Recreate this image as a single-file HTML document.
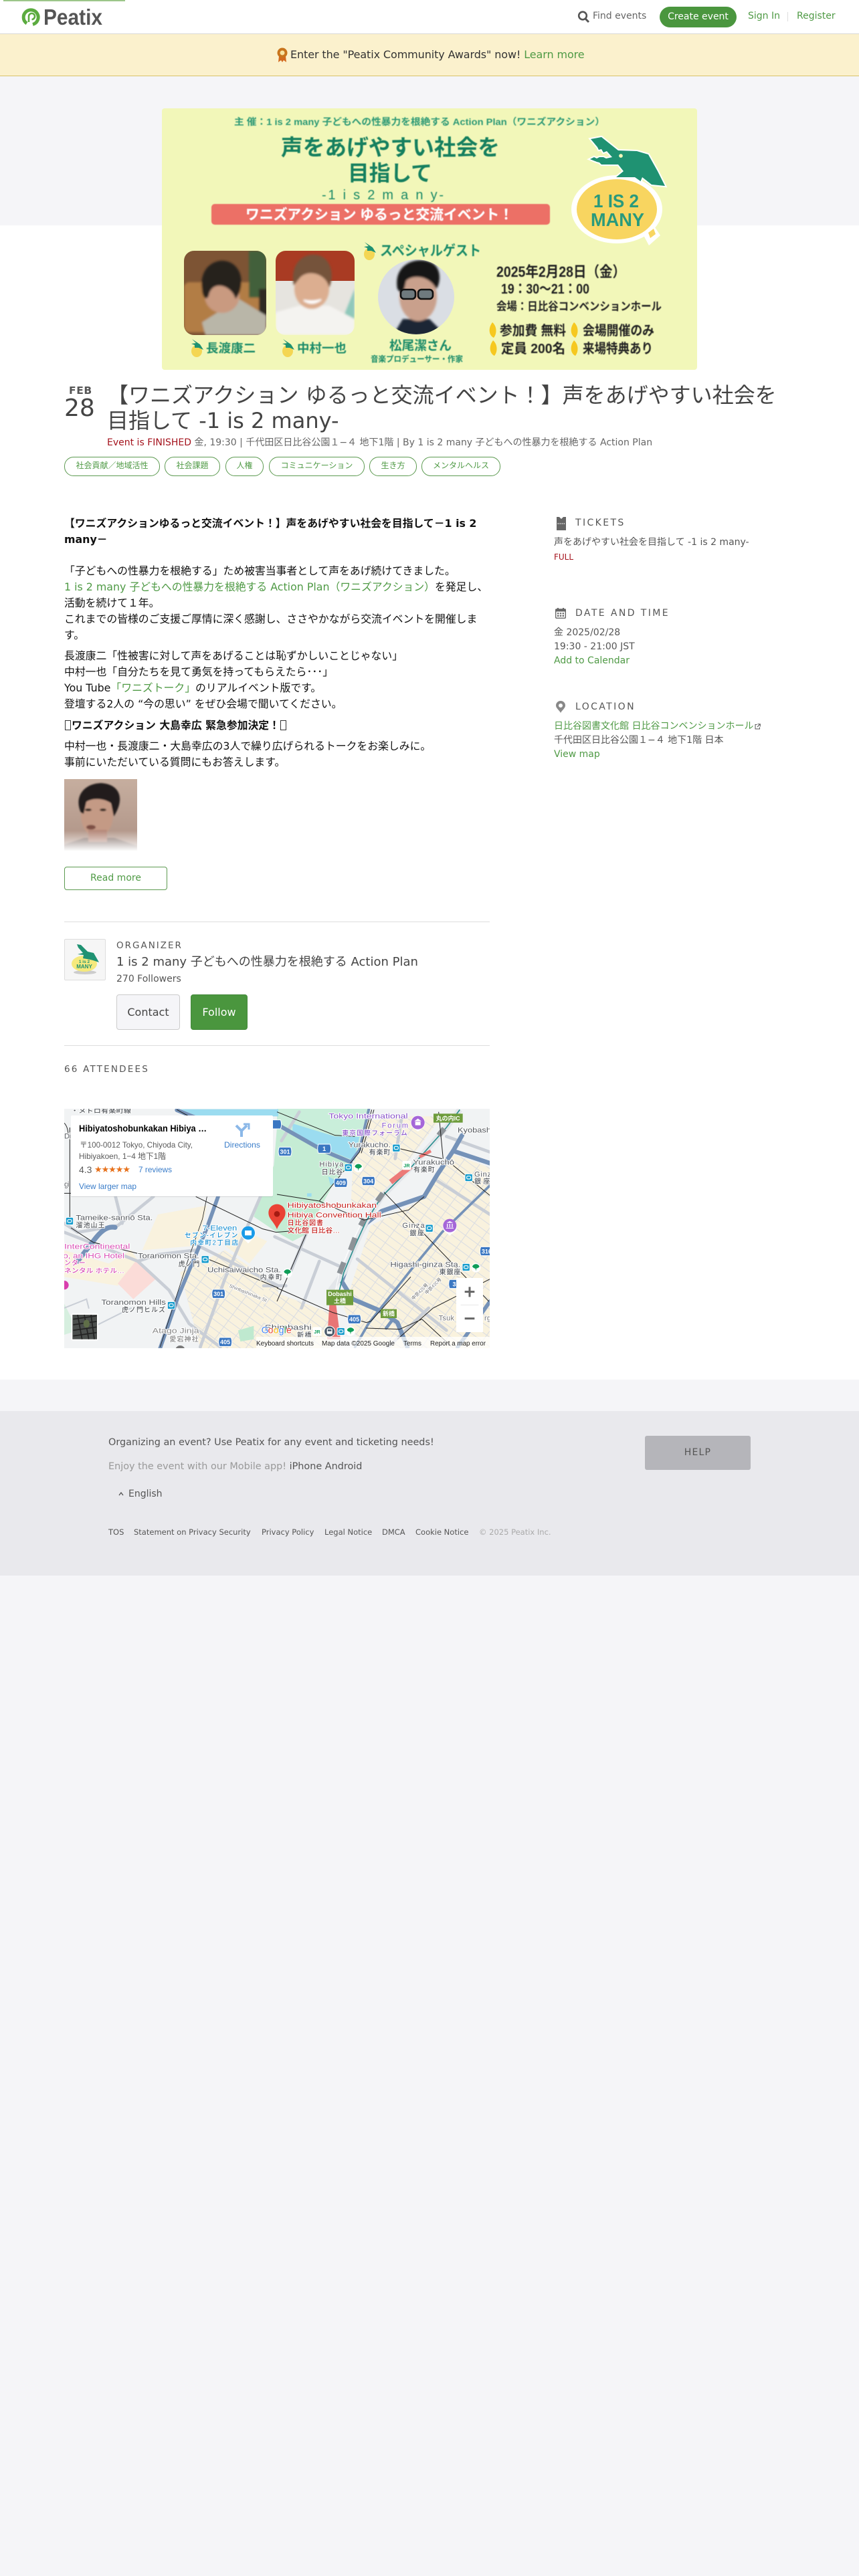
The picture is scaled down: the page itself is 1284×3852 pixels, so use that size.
<!DOCTYPE html>
<html lang="ja"><head><meta charset="utf-8"><title>Peatix</title>
<style>
html,body{margin:0;padding:0}
body{width:1284px;height:3852px;background:#f5f5f8;position:relative;overflow:hidden;font-family:"DejaVu Sans","Noto Sans CJK JP",sans-serif;color:#444}
.a{position:absolute;white-space:nowrap;line-height:20px}
.g{color:#4f9a45}
.b{color:#111;font-size:15.84px}
.s{font-size:14px;color:#555}
.h{font-size:14px;letter-spacing:2.4px;color:#555}
.tag{position:absolute;top:683px;height:27px;line-height:25px;border:1px solid #5c9a50;border-radius:14px;color:#4f9a45;font-size:12px;text-align:center;box-sizing:content-box;white-space:nowrap}
.f{font-size:11.5px;color:#555;top:2281px}
svg{position:absolute;display:block;overflow:hidden}
svg text{font-family:"Liberation Sans","Noto Sans CJK JP",sans-serif}
.tofu{display:inline-block;width:7px;height:13px;border:1px solid #333;vertical-align:-2px;margin:0 1px}
.m text{font-size:33px;fill:#55595e;stroke:#fff;stroke-width:6px;paint-order:stroke;stroke-linejoin:round;font-weight:500}
.m .w{fill:#fff;stroke:none;font-size:27px;text-anchor:middle;font-weight:700}
</style></head><body>

<div style="position:absolute;left:0;top:0;width:1284px;height:50px;background:#fff;border-bottom:1px solid #d8d8d4"></div>
<div style="position:absolute;left:5px;top:0;width:182px;height:2px;background:#9cc68a"></div>
<svg style="left:30px;top:8px" width="130" height="34" viewBox="0 0 130 34">
<path d="M10,27 A11,11 0 1 1 19,28.5" fill="none" stroke="#5bab3f" stroke-width="5"/>
<path d="M13,25 V16.5 A4.5,4.5 0 1 1 17.5,21" fill="none" stroke="#5bab3f" stroke-width="2.6"/>
<text x="35" y="29" font-size="33" font-weight="700" fill="#555" textLength="88" lengthAdjust="spacingAndGlyphs">Peatix</text></svg>
<svg style="left:862px;top:15px" width="20" height="20" viewBox="0 0 20 20"><circle cx="9" cy="8.5" r="5.8" fill="none" stroke="#555" stroke-width="2.6"/><path d="M13 13 L18 18" stroke="#555" stroke-width="3"/></svg>
<div class="a s" style="left:886px;top:14px;color:#666">Find events</div>
<div class="a" style="left:986px;top:10px;width:115px;height:31px;line-height:31px;background:#4a963e;border-radius:16px;color:#fff;font-size:14px;text-align:center">Create event</div>
<div class="a g" style="left:1118px;top:14px;font-size:14px">Sign In</div>
<div style="position:absolute;left:1177px;top:18px;width:1px;height:14px;background:#ddd"></div>
<div class="a g" style="left:1191px;top:14px;font-size:14px">Register</div>

<div style="position:absolute;left:0;top:51px;width:1284px;height:62px;background:#fbf1cd;border-bottom:1px solid #d8c26a"></div>
<svg style="left:412px;top:70px" width="20" height="24" viewBox="0 0 20 24"><path d="M5 14 L4 23 L8 20 L10 23 L12 20 L16 23 L15 14Z" fill="#d2691e"/><circle cx="10" cy="9" r="7.5" fill="#c8741c"/><circle cx="10" cy="9" r="3.5" fill="#f6e2a0"/></svg>
<div class="a" style="left:434px;top:72px;font-size:16px;color:#333;letter-spacing:-.1px">Enter the "Peatix Community Awards" now! <span class="g">Learn more</span></div>

<div style="position:absolute;left:0;top:337px;width:1284px;height:1726px;background:#fff"></div>

<!-- hero -->
<svg style="left:242px;top:162px" width="800" height="391" viewBox="0 0 800 391">
<defs>
<filter id="bl"><feGaussianBlur stdDeviation="1.6"/></filter><filter id="bs"><feGaussianBlur stdDeviation=".45"/></filter>
<clipPath id="p1"><rect x="33" y="213" width="123" height="126" rx="15"/></clipPath>
<clipPath id="p2"><rect x="170" y="213" width="118" height="126" rx="15"/></clipPath>
<clipPath id="p3"><ellipse cx="380" cy="282" rx="57" ry="56"/></clipPath>
<g id="mini"><ellipse cx="0" cy="6" rx="8" ry="9" fill="#f4d653"/><path d="M-7,-12 L5,-4 L10,4 L3,1 L-3,1 L-3,-3 L-8,-5 L-1,-6Z" fill="#1f9272"/></g>
<g id="lem"><path d="M0,-11 C7,-5 7,6 2,12 C-5,9 -7,-2 0,-11Z" fill="#f6c820"/></g>
</defs>
<rect width="800" height="391" rx="4" fill="#f2f7b9"/>
<g font-weight="700" fill="#14805f" filter="url(#bs)">
<text x="108" y="25" font-size="14" fill="#2f9a76" textLength="554" lengthAdjust="spacingAndGlyphs">主 催：1 is 2 many 子どもへの性暴力を根絶する Action Plan（ワニズアクション）</text>
<text x="178" y="70" font-size="33" textLength="327" lengthAdjust="spacingAndGlyphs">声をあげやすい社会を</text>
<text x="278" y="108" font-size="32" textLength="126" lengthAdjust="spacingAndGlyphs">目指して</text>
<text x="239" y="136" font-size="20" font-weight="400" textLength="182" fill="#1f8a68">-1 i s 2 m a n y-</text>
<rect x="74" y="143" width="506" height="31" rx="5" fill="#ec6f66"/>
<text x="125" y="166" font-size="21" fill="#fff" textLength="400" lengthAdjust="spacingAndGlyphs">ワニズアクション ゆるっと交流イベント！</text>
</g>
<ellipse cx="680" cy="151" rx="68" ry="51" fill="#fff"/><ellipse cx="680" cy="151" rx="60" ry="45" fill="#f8d560"/>
<path d="M641,46 L657,43 L682,63 L710,64 L727,69 L741,94 L752,116 L732,114 L718,103 L715.5,109 L707,103 L679,103 L690,94 L682,84 L657,84 L654,81 L650,80 L640,76 L646,73 L650,75 L654,73 L660,73 L664,75 L673,73 L665,64 L660,66 L657,61 L653,62 L651,58Z" fill="#1f9272" stroke="#fff" stroke-width="4" paint-order="stroke"/>
<circle cx="686" cy="71" r="3.5" fill="#f2f7b9" stroke="#1f9272" stroke-width="1.2"/>
<g font-weight="700" fill="#2a9a7c" font-size="28"><text x="645" y="148" textLength="68" lengthAdjust="spacingAndGlyphs">1 IS 2</text><text x="641" y="176" textLength="80" lengthAdjust="spacingAndGlyphs">MANY</text></g>
<path d="M720,190 L735,175 L745,190 L728,205Z" fill="#fff"/><path d="M727,186 L735,180 L738,188 L730,194Z" fill="#f8d560"/>
<g clip-path="url(#p1)"><rect x="33" y="213" width="123" height="126" fill="#7d5434"/><g filter="url(#bl)"><rect x="33" y="260" width="115" height="75" rx="8" fill="#b27d44"/><rect x="130" y="213" width="26" height="70" fill="#42613a"/><rect x="145" y="270" width="12" height="50" fill="#2d2a22"/><path d="M65,339 L60,320 L115,285 L156,310 L156,339Z" fill="#b9b6a8"/><ellipse cx="90" cy="280" rx="26" ry="26" fill="#c99a80"/><path d="M60,270 C55,235 85,220 105,232 C125,245 120,275 110,285 C105,265 75,255 70,280 C66,290 60,280 60,270Z" fill="#26221f"/></g></g>
<g clip-path="url(#p2)"><rect x="170" y="213" width="118" height="45" fill="#a93b23"/><rect x="170" y="258" width="118" height="50" fill="#e6e4df"/><g filter="url(#bl)"><path d="M272,310 L288,270 L288,339 Z" fill="#8fc8ba"/><path d="M170,339 L170,305 L205,295 L250,295 L288,315 L288,339Z" fill="#f4f3f0"/><ellipse cx="224" cy="270" rx="26" ry="30" fill="#dcae90"/><path d="M197,265 C190,225 220,212 240,222 C256,232 256,255 250,268 C245,245 215,240 205,255 Z" fill="#75523a"/><path d="M212,287 Q224,296 238,286 Q226,290 212,287Z" fill="#fff" stroke="#fff" stroke-width="2"/></g></g>
<g clip-path="url(#p3)"><rect x="320" y="220" width="120" height="125" fill="#dadee4"/><g filter="url(#bl)"><path d="M345,340 L360,315 L400,315 L425,340Z" fill="#1e2736"/><ellipse cx="383" cy="282" rx="28" ry="36" fill="#c9a08c"/><path d="M352,270 C345,230 385,220 405,232 C420,242 415,265 410,270 C400,250 375,248 365,258 L360,280Z" fill="#141414"/></g><rect x="357" y="271" width="22" height="14" rx="5" fill="#6f7a7e" stroke="#111" stroke-width="2.6"/><rect x="383" y="271" width="22" height="14" rx="5" fill="#6f7a7e" stroke="#111" stroke-width="2.6"/></g>
<g font-weight="700" fill="#1c8c69" filter="url(#bs)">
<text x="66" y="365" font-size="18" textLength="74" lengthAdjust="spacingAndGlyphs">長渡康二</text>
<text x="202" y="365" font-size="18" textLength="74" lengthAdjust="spacingAndGlyphs">中村一也</text>
<text x="340" y="361" font-size="19" textLength="93" lengthAdjust="spacingAndGlyphs">松尾潔さん</text>
<text x="312" y="379" font-size="12" textLength="138" lengthAdjust="spacingAndGlyphs">音楽プロデューサー・作家</text>
<text x="326" y="220" font-size="21" textLength="151" lengthAdjust="spacingAndGlyphs">スペシャルゲスト</text>
</g>
<use href="#mini" x="52" y="357"/><use href="#mini" x="188" y="357"/><use href="#mini" x="310" y="212"/>
<g font-weight="700" fill="#222" filter="url(#bs)">
<text x="500" y="252" font-size="22" textLength="193" lengthAdjust="spacingAndGlyphs">2025年2月28日（金）</text>
<text x="507" y="277" font-size="21" textLength="132" lengthAdjust="spacingAndGlyphs">19：30～21：00</text>
<text x="500" y="302" font-size="17" textLength="247" lengthAdjust="spacingAndGlyphs">会場：日比谷コンベンションホール</text>
<text x="505" y="339" font-size="20" textLength="99" lengthAdjust="spacingAndGlyphs">参加費 無料</text>
<text x="629" y="339" font-size="20" textLength="107" lengthAdjust="spacingAndGlyphs">会場開催のみ</text>
<text x="507" y="366" font-size="20" textLength="96" lengthAdjust="spacingAndGlyphs">定員 200名</text>
<text x="629" y="366" font-size="20" textLength="105" lengthAdjust="spacingAndGlyphs">来場特典あり</text>
</g>
<use href="#lem" x="494" y="331"/><use href="#lem" x="616" y="331"/><use href="#lem" x="495" y="358"/><use href="#lem" x="616" y="358"/>
</svg>

<!-- title -->
<div class="a" style="left:103px;top:574px;font-size:15.5px;font-weight:700;color:#555;letter-spacing:.6px">FEB</div>
<div class="a" style="left:96px;top:591px;font-size:36px;line-height:40px;color:#444">28</div>
<div class="a" style="left:160px;top:572px;font-size:32px;line-height:38px;color:#444">【ワニズアクション ゆるっと交流イベント！】声をあげやすい社会を<br>目指して -1 is 2 many-</div>
<div class="a" style="left:160px;top:652px;font-size:14px;color:#666"><span style="color:#a4121c">Event is FINISHED</span> 金, 19:30 | 千代田区日比谷公園１−４ 地下1階 | By 1 is 2 many 子どもへの性暴力を根絶する Action Plan</div>
<div class="tag" style="left:96px;width:141px">社会貢献／地域活性</div>
<div class="tag" style="left:246px;width:81px">社会課題</div>
<div class="tag" style="left:337px;width:55px">人権</div>
<div class="tag" style="left:402px;width:141px">コミュニケーション</div>
<div class="tag" style="left:552px;width:69px">生き方</div>
<div class="tag" style="left:630px;width:116px">メンタルヘルス</div>

<!-- description -->
<div class="a b" style="left:96px;top:773px;font-weight:700">【ワニズアクションゆるっと交流イベント！】声をあげやすい社会を目指して－1 is 2</div>
<div class="a b" style="left:96px;top:797px;font-weight:700">many－</div>
<div class="a b" style="left:96px;top:844px">「子どもへの性暴力を根絶する」ため被害当事者として声をあげ続けてきました。</div>
<div class="a b" style="left:96px;top:868px"><span class="g">1 is 2 many 子どもへの性暴力を根絶する Action Plan（ワニズアクション）</span>を発足し、</div>
<div class="a b" style="left:96px;top:892px">活動を続けて１年。</div>
<div class="a b" style="left:96px;top:916px">これまでの皆様のご支援ご厚情に深く感謝し、ささやかながら交流イベントを開催しま</div>
<div class="a b" style="left:96px;top:940px">す。</div>
<div class="a b" style="left:96px;top:971px">長渡康二「性被害に対して声をあげることは恥ずかしいことじゃない」</div>
<div class="a b" style="left:96px;top:995px">中村一也「自分たちを見て勇気を持ってもらえたら･･･」</div>
<div class="a b" style="left:96px;top:1019px">You Tube<span class="g">「ワニズトーク」</span>のリアルイベント版です。</div>
<div class="a b" style="left:96px;top:1043px">登壇する2人の “今の思い” をぜひ会場で聞いてください。</div>
<div class="a b" style="left:96px;top:1075px;font-weight:700"><span class="tofu"></span>ワニズアクション 大島幸広 緊急参加決定！<span class="tofu"></span></div>
<div class="a b" style="left:96px;top:1106px">中村一也・長渡康二・大島幸広の3人で繰り広げられるトークをお楽しみに。</div>
<div class="a b" style="left:96px;top:1130px">事前にいただいている質問にもお答えします。</div>
<svg style="left:96px;top:1165px" width="109" height="110" viewBox="0 0 109 110">
<defs><linearGradient id="fade" x1="0" y1="0" x2="0" y2="1"><stop offset=".7" stop-color="#fff" stop-opacity="0"/><stop offset=".98" stop-color="#fff"/></linearGradient>
<linearGradient id="wall" x1="0" y1="0" x2="0" y2="1"><stop offset="0" stop-color="#c6ae9f"/><stop offset="1" stop-color="#ad9184"/></linearGradient><filter id="b2"><feGaussianBlur stdDeviation="1"/></filter></defs>
<rect width="109" height="110" fill="url(#wall)"/>
<g filter="url(#b2)"><path d="M0,110 L0,98 L30,88 L75,88 L109,100 L109,110Z" fill="#7e6a63"/><ellipse cx="49" cy="54" rx="24" ry="33" fill="#c49a85"/><rect x="36" y="76" width="28" height="18" fill="#b5897a"/><path d="M25,50 C14,26 30,6 56,6 C82,8 92,28 74,56 L70,36 C58,28 42,28 33,34 L29,52Z" fill="#241d1a"/><ellipse cx="36" cy="46" rx="5" ry="2" fill="#33261f"/><ellipse cx="58" cy="46" rx="5" ry="2" fill="#33261f"/><ellipse cx="40" cy="72" rx="7" ry="3.5" fill="#7d4f44"/></g>
<rect width="109" height="110" fill="url(#fade)"/></svg>
<div class="a g" style="left:96px;top:1296px;width:152px;height:33px;line-height:33px;border:1px solid #5c9a50;border-radius:4px;text-align:center;font-size:14px">Read more</div>

<!-- organizer -->
<div style="position:absolute;left:96px;top:1378px;width:636px;height:1px;background:#ddd"></div>
<div style="position:absolute;left:96px;top:1404px;width:60px;height:60px;border:1px solid #ddd;background:#f6f6f6;border-radius:2px"></div>
<svg style="left:97px;top:1405px" width="60" height="60" viewBox="0 0 60 60"><ellipse cx="30" cy="49" rx="17" ry="3" fill="#ccc"/><ellipse cx="29" cy="36" rx="19" ry="12" fill="#f5e97d"/><path d="M18,7 L24,8 L34,18 L43,20 L51,34 L42,31 L38,30 L27,28 L28,23 L19,22 L27,20 L20,12Z" fill="#1f9272"/><text x="29" y="35" font-size="6.5" font-weight="700" fill="#1f9272" text-anchor="middle">1 is 2</text><text x="29" y="43" font-size="8" font-weight="700" fill="#1f9272" text-anchor="middle">MANY</text></svg>
<div class="a h" style="left:174px;top:1404px;letter-spacing:2px;font-size:13.5px">ORGANIZER</div>
<div class="a" style="left:174px;top:1429px;font-size:18px;color:#444">1 is 2 many 子どもへの性暴力を根絶する Action Plan</div>
<div class="a s" style="left:174px;top:1454px">270 Followers</div>
<div class="a" style="left:174px;top:1487px;width:93px;height:51px;line-height:51px;background:#f5f5f8;border:1px solid #ccc;border-radius:4px;text-align:center;font-size:16px;color:#444">Contact</div>
<div class="a" style="left:285px;top:1487px;width:83px;height:51px;line-height:51px;background:#4a963e;border:1px solid #43893a;border-radius:4px;text-align:center;font-size:16px;color:#fff">Follow</div>
<div style="position:absolute;left:96px;top:1563px;width:636px;height:1px;background:#ddd"></div>
<div class="a h" style="left:96px;top:1589px;letter-spacing:2.2px;font-size:13.5px">66 ATTENDEES</div>

<!-- sidebar -->
<svg style="left:832px;top:773px" width="14" height="20" viewBox="0 0 14 20"><path d="M0,0 H4 L7,3 L10,0 H14 V20 H0Z" fill="#666"/><path d="M1.5,10 H12.5" stroke="#fff" stroke-width="1.2" stroke-dasharray="1.6 1.4"/></svg>
<div class="a h" style="left:860px;top:772px">TICKETS</div>
<div class="a s" style="left:828px;top:801px">声をあげやすい社会を目指して -1 is 2 many-</div>
<div class="a" style="left:828px;top:823px;font-size:12px;color:#a4121c">FULL</div>
<svg style="left:830px;top:909px" width="16" height="16" viewBox="0 0 16 16"><rect x="0.7" y="2" width="14.6" height="13.3" rx="1" fill="#fff" stroke="#666" stroke-width="1.4"/><rect x="0.7" y="2" width="14.6" height="3.5" fill="#666"/><rect x="3" y="0" width="2" height="3" fill="#666"/><rect x="11" y="0" width="2" height="3" fill="#666"/><path d="M3 7.2h2.4v2.2H3zM6.8 7.2h2.4v2.2H6.8zM10.6 7.2H13v2.2h-2.4zM3 10.8h2.4V13H3zM6.8 10.8h2.4V13H6.8zM10.6 10.8H13V13h-2.4z" fill="#666"/></svg>
<div class="a h" style="left:860px;top:907px">DATE AND TIME</div>
<div class="a s" style="left:828px;top:936px">金 2025/02/28</div>
<div class="a s" style="left:828px;top:957px">19:30 - 21:00 JST</div>
<div class="a g" style="left:828px;top:978px;font-size:14px">Add to Calendar</div>
<svg style="left:831px;top:1048px" width="14" height="18" viewBox="0 0 14 18"><path fill-rule="evenodd" d="M7,0 A7,7 0 0 1 14,7 C14,11 9,14 7,18 C5,14 0,11 0,7 A7,7 0 0 1 7,0Z M7,4 A3,3 0 1 0 7,10 A3,3 0 1 0 7,4Z" fill="#888"/></svg>
<div class="a h" style="left:860px;top:1047px">LOCATION</div>
<div class="a g" style="left:828px;top:1076px;font-size:14px">日比谷図書文化館 日比谷コンベンションホール</div>
<svg style="left:1128px;top:1082px" width="9" height="9" viewBox="0 0 9 9"><path d="M3.5 1.5H1V8H7.5V5.5M4.5.7H8.3V4.5M8 1L4 5" fill="none" stroke="#555" stroke-width="1"/></svg>
<div class="a s" style="left:828px;top:1097px">千代田区日比谷公園１−４ 地下1階 日本</div>
<div class="a g" style="left:828px;top:1118px;font-size:14px">View map</div>

<!-- map -->
<svg class="m" style="left:96px;top:1658px" width="636" height="358" viewBox="0 0 636 358">
<defs>
<pattern id="grid" width="68" height="34" patternUnits="userSpaceOnUse" patternTransform="rotate(36)"><rect width="68" height="34" fill="#f9f2de"/><path d="M0,0H68M0,0V34" stroke="#d9dce2" stroke-width="6"/></pattern>
<g id="me"><rect x="-17" y="-17" width="34" height="34" rx="5" fill="#169ccd" stroke="#fff" stroke-width="3"/><rect x="-9" y="-7" width="18" height="13" rx="5" fill="none" stroke="#fff" stroke-width="3.5"/></g>
<g id="tr"><circle cx="0" cy="2" r="21" fill="#fff"/><path d="M-16,-3 C-12,-18 12,-18 16,-3 C10,5 4,4 2,6 L0,17 L-2,6 C-6,4 -10,5 -16,-3Z" fill="#0f9d58"/></g>
<path id="bd" d="M-26,-20 H26 Q34,0 26,20 H-26 Q-34,0 -26,-20Z" fill="#3a77c2" stroke="#fff" stroke-width="3"/>
</defs>
<rect width="636" height="358" fill="#f1f3f4"/>
<g transform="translate(0,-2) scale(.33333)" fill="none">
<!-- blocks -->
<path d="M420,480 L640,440 L600,620 L350,640Z" fill="#f9f2de"/>
<path d="M520,740 L720,640 L960,800 L960,1080 L610,1080Z" fill="url(#grid)"/>
<path d="M0,640 L200,700 L300,640 L340,700 L240,800 L0,760Z" fill="#f9f2de"/>
<path d="M320,690 L410,770 L310,860 L240,790Z" fill="#fbdcd8"/>
<path d="M720,620 L800,550 L910,600 L830,700Z" fill="#f9f2de"/>
<path d="M780,1000 L850,980 L850,1040 L790,1050Z" fill="#bfe9cf"/>
<g transform="translate(954,0)">
<path d="M340,260 L400,60 L600,40 L740,40 L560,280 L480,380 L330,470Z" fill="url(#grid)"/>
<path d="M420,530 L640,420 L790,210 L955,270 L955,1080 L380,1080 L300,900Z" fill="url(#grid)"/>
<path d="M-60,810 L260,930 L240,1080 L-60,1080Z" fill="url(#grid)"/>
<path d="M0,5 L410,5 L375,130 L350,240 L200,190 L0,80Z" fill="#c9eeda"/>
<path d="M70,72 L260,130 L370,132 L345,238 L200,180 L70,105Z" fill="#9bdcf0"/>
<path d="M0,90 L200,190 L340,240 L260,330 L130,570 L70,600 L0,560 L-104,490 L-74,400 L-14,260Z" fill="#c5ecd4"/>
<path d="M230,310 L270,330 L240,350 Z M135,385 h20 v15 h-20Z" fill="#9bdcf0"/>
</g>
<path d="M520,8 L960,8 L960,40 L600,40Z" fill="#9bdcf0"/>
<path d="M0,880 L60,1000 L0,1020Z" fill="#d6efdf"/>
<!-- light roads -->
<g stroke="#c9ced6" stroke-width="14" stroke-linecap="round">
<path d="M400,400 L240,530 L60,560 L0,520M0,560 L130,610 L330,690 L470,820 L560,970 L700,1075M880,400 L810,560 L720,770 L610,1075M230,400 L260,520M590,640 L420,660 L330,690M600,620 L960,800"/>
<path d="M0,900 L100,860 L110,900M100,1000 L300,900"  stroke-width="6"/>
<g transform="translate(954,0)"><path d="M-10,580 L275,710M130,570 L60,740M360,680 L760,1000M720,330 L955,480M760,130 L955,200M100,20 L20,150M560,40 L530,230M-60,800 L40,800M190,690 L110,900M500,1075 L680,900"/></g>
</g>
<!-- highways -->
<g stroke="#7592b8" stroke-linejoin="round" stroke-linecap="round">
<path d="M690,400 L640,540 L590,660 L510,850 L430,1080" stroke-width="17"/>
<path d="M228,538 C190,530 160,560 130,600 L60,690" stroke-width="22"/>
<path d="M505,12 L600,50" stroke-width="18"/>
<g transform="translate(954,0)">
<path d="M-10,70 L210,195 L330,245" stroke-width="18"/>
<path d="M330,245 L370,190 L412,8" stroke-width="12"/>
<path d="M955,250 L790,195 L830,125" stroke-width="20"/>
<path d="M790,195 L720,300 L660,400 L470,465 L400,520 L340,640 L290,780 L340,860 L470,915 L540,965 L585,1075" stroke-width="20"/>
<path d="M955,350 L740,560 L600,730 L410,970 L350,1075" stroke-width="11"/>
<path d="M955,870 L850,1020 L810,1075" stroke-width="17"/>
<path d="M490,990 L520,950" stroke-width="14"/>
</g></g>
<!-- rail -->
<g transform="translate(954,0)">
<path d="M240,820 L300,740 L350,620 L400,510 L470,400 L600,270 L760,90 L820,10" stroke="#e3e6ea" stroke-width="26"/>
<path d="M280,820 L300,740 L350,620 L400,510 L470,400 L600,270 L760,90 L820,10" stroke="#2b8f8f" stroke-width="5"/>
<path d="M262,820 L280,740 L330,620 L385,505" stroke="#fff" stroke-width="3"/>
<g stroke="#8d9398" stroke-width="24"><path d="M280,745 L300,695M330,640 L350,585M375,530 L392,500M450,420 L475,385M725,125 L750,95"/></g>
<path d="M510,335 L600,265" stroke="#ec7a78" stroke-width="24"/><path d="M640,222 L690,195" stroke="#ec7a78" stroke-width="14"/>
<path d="M235,885 L265,885 L285,1040 L225,1040Z" fill="#e87575"/>
</g>
<!-- black lines -->
<g stroke="#222" stroke-width="3">
<path d="M0,385 L30,385M25,90 L25,500M590,400 L890,545 L950,560 L1010,555M30,540 L130,605 L330,655M620,670 L960,810M505,10 L560,40"/>
<path d="M0,70 Q20,90 18,140"/>
<path d="M640,400 L620,500 L560,670 L430,1075" stroke-width="2.5"/>
<g transform="translate(954,0)"><path d="M0,810 L250,920 L400,965 L420,960 L600,760M0,390 L190,420 L280,460 L390,505 L590,460 L660,400M400,990 L550,995 L650,950 L780,1070M480,380 L950,870M550,185 L740,230M725,20 L745,230M790,260 L955,395M0,20 L260,125 L350,130M425,10 L370,200 L190,420M435,10 L378,205M130,570 L0,870M955,770 L700,900 L540,1040"/></g>
</g>
<!-- labels left -->
<g>
<text x="0" y="140" textLength="30">Di</text><text x="0" y="355" textLength="22">gi</text>
<text x="30" y="24" style="font-size:26px" textLength="270" lengthAdjust="spacingAndGlyphs">・メトロ有楽町線</text>
<text x="52" y="505" textLength="345" lengthAdjust="spacingAndGlyphs">Tameike-sannō Sta.</text>
<text x="52" y="538" style="font-size:30px" textLength="130">溜池山王</text>
<text x="0" y="634" style="fill:#d94fb5" textLength="295" lengthAdjust="spacingAndGlyphs">InterContinental</text>
<text x="-5" y="677" style="fill:#d94fb5" textLength="275" lengthAdjust="spacingAndGlyphs">o, an IHG Hotel</text>
<text x="0" y="708" style="fill:#d94fb5;font-size:30px" textLength="95">ンター</text>
<text x="0" y="742" style="fill:#d94fb5;font-size:29px" textLength="270" lengthAdjust="spacingAndGlyphs">ネンタル ホテル…</text>
<circle cx="0" cy="797" r="20" fill="#d93ead"/>
<text x="330" y="676" textLength="275" lengthAdjust="spacingAndGlyphs">Toranomon Sta.</text>
<text x="512" y="712" style="font-size:30px" textLength="95">虎ノ門</text>
<use href="#me" x="632" y="682"/><use href="#me" x="24" y="510"/><use href="#me" x="480" y="888"/>
<text x="620" y="552" style="fill:#1a8fd1" textLength="155" lengthAdjust="spacingAndGlyphs">7-Eleven</text>
<text x="540" y="583" style="fill:#1a8fd1;font-size:29px" textLength="238">セブン-イレブン</text>
<text x="565" y="616" style="fill:#1a8fd1;font-size:29px" textLength="215">内幸町2丁目店</text>
<path d="M825,610 L800,585 A32,32 0 1 1 850,585Z" fill="#fff"/><circle cx="825" cy="563" r="30" fill="#1a9be8"/><rect x="810" y="552" width="30" height="22" fill="#fff"/>
<text x="642" y="740" textLength="330" lengthAdjust="spacingAndGlyphs">Uchisaiwaicho Sta.</text>
<text x="878" y="773" style="font-size:30px" textLength="100">内幸町</text>
<text x="738" y="805" transform="rotate(22 738 805)" style="font-size:21px;fill:#777" textLength="180" lengthAdjust="spacingAndGlyphs">Shinbashinaka St</text>
<use href="#bd" x="692" y="836"/><text class="w" x="692" y="846">301</text>
<text x="166" y="885" textLength="290" lengthAdjust="spacingAndGlyphs">Toranomon Hills</text>
<text x="258" y="918" style="font-size:30px" textLength="195">虎ノ門ヒルズ</text>
<text x="395" y="1012" style="fill:#888" textLength="210" lengthAdjust="spacingAndGlyphs">Atago Jinja</text>
<text x="472" y="1050" style="font-size:30px;fill:#888" textLength="130">愛宕神社</text>
<use href="#bd" x="722" y="1052"/><text class="w" x="722" y="1062">405</text>
<circle cx="520" cy="1090" r="22" fill="#777"/>
<rect x="32" y="925" width="120" height="120" rx="3" fill="#fff"/><rect x="37" y="930" width="110" height="110" fill="#4a4e4c"/>
<path d="M40,950 L145,935M40,975 L145,960M40,1000 L145,985M40,1025 L145,1010M60,930 L80,1040M90,930 L110,1040M120,930 L135,1040" stroke="#222" stroke-width="5"/><ellipse cx="100" cy="970" rx="14" ry="18" fill="#5f6e48"/>
</g>
<!-- labels right -->
<g transform="translate(954,0)">
<use href="#bd" x="36" y="198"/><text class="w" x="36" y="208">301</text>
<use href="#bd" x="-10" y="76"/><use href="#bd" x="212" y="185"/><text class="w" x="212" y="195">1</text>
<use href="#bd" x="286" y="338"/><text class="w" x="286" y="348">409</text>
<use href="#bd" x="410" y="330"/><text class="w" x="410" y="340">304</text>
<use href="#bd" x="347" y="950"/><text class="w" x="347" y="960">405</text>
<use href="#bd" x="940" y="645"/><text class="w" x="940" y="655">316</text>
<use href="#bd" x="800" y="792"/><text class="w" x="795" y="802">3</text>
<text x="232" y="50" style="fill:#8a55c9" textLength="355" lengthAdjust="spacingAndGlyphs">Tokyo International</text>
<text x="470" y="92" style="fill:#8a55c9" textLength="118">Forum</text>
<text x="292" y="124" style="fill:#8a55c9;font-size:29px" textLength="292">東京国際フォーラム</text>
<path d="M632,108 L607,88 A32,32 0 1 1 657,88Z" fill="#fff"/><circle cx="632" cy="68" r="30" fill="#a566d8"/><path d="M632,50 L648,62 H616Z M620,64 h24 v16 h-24Z" fill="#fff"/>
<rect x="702" y="28" width="131" height="40" fill="#6e9c3c"/><text class="w" x="767" y="58">丸の内IC</text>
<text x="810" y="112" textLength="150" lengthAdjust="spacingAndGlyphs">Kyobash</text>
<text x="320" y="178" textLength="190" lengthAdjust="spacingAndGlyphs">Yurakucho.</text>
<text x="413" y="211" style="font-size:30px" textLength="95">有楽町</text><use href="#me" x="535" y="182"/>
<text x="190" y="266" textLength="108">Hibiya</text><text x="200" y="300" style="font-size:30px" textLength="95">日比谷</text>
<use href="#me" x="320" y="270"/><use href="#tr" x="365" y="268"/>
<text x="610" y="256" textLength="185" lengthAdjust="spacingAndGlyphs">Yurakuchō</text><text x="612" y="290" style="font-size:30px" textLength="95">有楽町</text>
<rect x="562" y="240" width="40" height="40" rx="6" fill="#fff"/><text class="w" x="582" y="269" style="fill:#0f9d58;font-size:22px">JR</text>
<text x="885" y="310" textLength="75">Ginz</text><text x="885" y="342" style="font-size:30px" textLength="70">銀座</text><use href="#me" x="860" y="315"/>
<text x="47" y="450" style="fill:#c5221f" textLength="400" lengthAdjust="spacingAndGlyphs">Hibiyatoshobunkakan</text>
<text x="47" y="494" style="fill:#c5221f" textLength="420" lengthAdjust="spacingAndGlyphs">Hibiya Convention Hall</text>
<text x="47" y="528" style="fill:#c5221f;font-size:30px" textLength="160">日比谷図書</text>
<text x="47" y="562" style="fill:#c5221f;font-size:30px" textLength="235" lengthAdjust="spacingAndGlyphs">文化館 日比谷…</text>
<path d="M0,546 C-15,510 -38,500 -38,472 A38,38 0 0 1 38,472 C38,500 15,510 0,546Z" fill="#ea4335"/><circle cx="0" cy="478" r="13" fill="#a51a12"/>
<text x="562" y="540" textLength="100">Ginza</text><text x="595" y="574" style="font-size:30px" textLength="65">銀座</text><use href="#me" x="683" y="542"/>
<path d="M775,575 L750,555 A32,32 0 1 1 800,555Z" fill="#fff"/><circle cx="775" cy="530" r="30" fill="#a566d8"/><path d="M760,518 L775,510 L790,518Z M762,522 v16 h4 v-16Z M773,522 v16 h4 v-16Z M784,522 v16 h4 v-16Z M758,540 h34 v3 h-34Z" fill="#fff"/>
<text x="508" y="715" textLength="315" lengthAdjust="spacingAndGlyphs">Higashi-ginza Sta.</text>
<text x="728" y="748" style="font-size:30px" textLength="95">東銀座</text><use href="#me" x="848" y="717"/><use href="#tr" x="892" y="717"/>
<use href="#tr" x="47" y="741"/>
<text x="612" y="865" transform="rotate(-45 612 865)" style="font-size:21px;fill:#777" textLength="95">中京429号</text>
<text x="672" y="840" transform="rotate(-45 672 840)" style="font-size:21px;fill:#777" textLength="95">中京430号</text>
<rect x="222" y="818" width="120" height="69" fill="#6e9c3c"/><text class="w" x="282" y="846">Dobashi</text><text class="w" x="282" y="877">土橋</text>
<rect x="465" y="905" width="72" height="40" fill="#6e9c3c"/><text class="w" x="501" y="935">新橋</text>
<text x="725" y="955" style="fill:#777" textLength="70">Tsuk</text><text x="930" y="955" style="fill:#777" textLength="30">ng</text>
<text x="-55" y="998" textLength="210" lengthAdjust="spacingAndGlyphs">Shimbashi</text><text x="90" y="1032" style="font-size:30px" textLength="65">新橋</text>
<rect x="160" y="985" width="40" height="40" rx="6" fill="#fff"/><text class="w" x="180" y="1014" style="fill:#0f9d58;font-size:22px">JR</text>
<circle cx="236" cy="1005" r="24" fill="#4a5a6a" stroke="#fff" stroke-width="3"/><rect x="224" y="992" width="24" height="24" rx="4" fill="#fff"/><rect x="228" y="996" width="16" height="8" fill="#4a5a6a"/>
<use href="#me" x="287" y="1005"/><use href="#tr" x="330" y="1002"/>
<g><text x="-70" y="1012" style="font-size:42px;fill:#4285f4;stroke-width:4px">G</text><text x="-40" y="1012" style="font-size:42px;fill:#ea4335;stroke-width:4px">o</text><text x="-16" y="1012" style="font-size:42px;fill:#fbbc05;stroke-width:4px">o</text><text x="8" y="1012" style="font-size:42px;fill:#4285f4;stroke-width:4px">g</text><text x="32" y="1012" style="font-size:42px;fill:#34a853;stroke-width:4px">l</text><text x="42" y="1012" style="font-size:42px;fill:#ea4335;stroke-width:4px">e</text></g>
<rect x="804" y="765" width="120" height="243" rx="2" fill="#fff"/><path d="M824,886 H904" stroke="#e6e6e6" stroke-width="3"/><path d="M864,805 V850 M842,827 H886 M842,947 H886" stroke="#666" stroke-width="9"/>
</g>
</g>
<rect x="287" y="341" width="349" height="17" fill="#fff" opacity=".72"/>
<g>
<text x="287" y="354" style="font-size:10px;fill:#222;stroke:none;font-weight:400" textLength="86" lengthAdjust="spacingAndGlyphs">Keyboard shortcuts</text>
<text x="385" y="354" style="font-size:10px;fill:#222;stroke:none;font-weight:400" textLength="109" lengthAdjust="spacingAndGlyphs">Map data ©2025 Google</text>
<text x="507" y="354" style="font-size:10px;fill:#222;stroke:none;font-weight:400" textLength="27" lengthAdjust="spacingAndGlyphs">Terms</text>
<text x="547" y="354" style="font-size:10px;fill:#222;stroke:none;font-weight:400" textLength="83" lengthAdjust="spacingAndGlyphs">Report a map error</text>
</g>
<!-- info card -->
<rect x="10" y="10" width="302" height="121" rx="2" fill="#000" opacity=".12" transform="translate(0,1)"/>
<rect x="10" y="10" width="302" height="121" rx="2" fill="#fff"/>
<g>
<text x="22" y="34" style="font-size:14px;fill:#000;stroke:none;font-weight:700" textLength="191" lengthAdjust="spacingAndGlyphs">Hibiyatoshobunkakan Hibiya …</text>
<text x="23" y="58" style="font-size:12px;fill:#5b5b5b;stroke:none;font-weight:400" textLength="169" lengthAdjust="spacingAndGlyphs">〒100-0012 Tokyo, Chiyoda City,</text>
<text x="22" y="75" style="font-size:12px;fill:#5b5b5b;stroke:none;font-weight:400" textLength="130" lengthAdjust="spacingAndGlyphs">Hibiyakoen, 1−4 地下1階</text>
<text x="22" y="96" style="font-size:14px;fill:#5b5b5b;stroke:none;font-weight:400">4.3</text>
<text x="45" y="95" style="font-size:13px;fill:#e7711b;stroke:none;font-weight:400;font-family:'DejaVu Sans',sans-serif" textLength="54">★★★★★</text>
<text x="111" y="95" style="font-size:12px;fill:#3a7dc9;stroke:none;font-weight:400" textLength="50" lengthAdjust="spacingAndGlyphs">7 reviews</text>
<text x="22" y="120" style="font-size:12px;fill:#3a7dc9;stroke:none;font-weight:400" textLength="86" lengthAdjust="spacingAndGlyphs">View larger map</text>
<text x="239" y="58" style="font-size:12px;fill:#3a7dc9;stroke:none;font-weight:400" textLength="54" lengthAdjust="spacingAndGlyphs">Directions</text>
</g>
<path d="M265,42 V33 M265,33 L257,25 M265,33 L273,25" stroke="#8bb8e8" stroke-width="4" fill="none"/><path d="M268,23 h8 v8" fill="none" stroke="#8bb8e8" stroke-width="3"/>
</svg>

<!-- footer -->
<div style="position:absolute;left:0;top:2110px;width:1284px;height:246px;background:#e9e9ed"></div>
<div class="a" style="left:162px;top:2147px;font-size:14.4px;color:#555">Organizing an event? Use Peatix for any event and ticketing needs!</div>
<div class="a" style="left:162px;top:2183px;font-size:14.4px;color:#999">Enjoy the event with our Mobile app! <span style="color:#555">iPhone Android</span></div>
<div class="a" style="left:964px;top:2147px;width:158px;height:51px;line-height:51px;background:#b5b5ba;border-radius:3px;text-align:center;font-size:14px;color:#555;letter-spacing:1.2px">HELP</div>
<svg style="left:177px;top:2230px" width="8" height="8" viewBox="0 0 8 8"><path d="M1 6 L4 2 L7 6" fill="none" stroke="#555" stroke-width="1.4"/></svg>
<div class="a s" style="left:192px;top:2224px">English</div>
<div class="a f" style="left:162px">TOS</div>
<div class="a f" style="left:200px">Statement on Privacy Security</div>
<div class="a f" style="left:391px">Privacy Policy</div>
<div class="a f" style="left:485px">Legal Notice</div>
<div class="a f" style="left:571px">DMCA</div>
<div class="a f" style="left:621px">Cookie Notice</div>
<div class="a f" style="left:716px;color:#aaa">© 2025 Peatix Inc.</div>
</body></html>
